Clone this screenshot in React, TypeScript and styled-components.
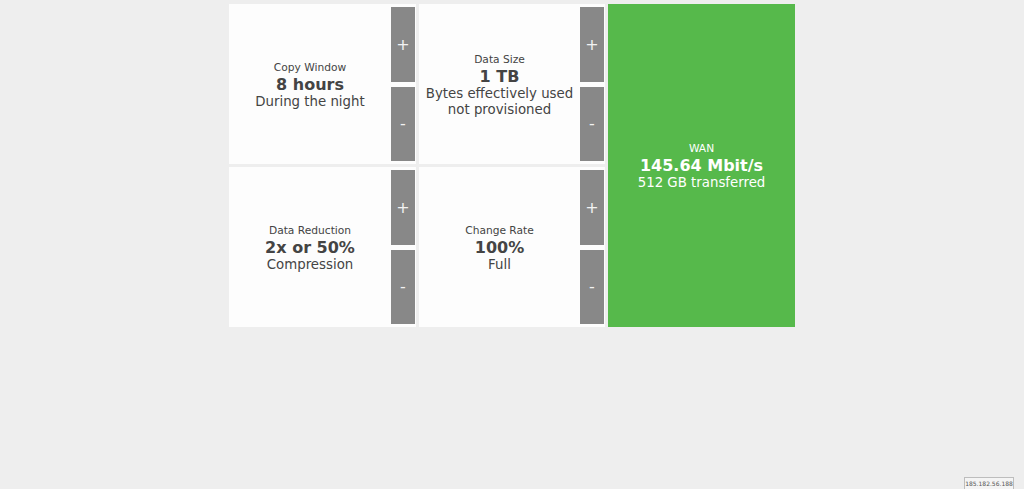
import React from "react";
import styled, { createGlobalStyle } from "styled-components";

const Global = createGlobalStyle`
  html, body { margin: 0; padding: 0; background: #eeeeee; }
  body { font-family: "DejaVu Sans", Verdana, sans-serif; height: 489px; overflow: hidden; }
`;

const Page = styled.div`
  display: flex;
  justify-content: center;
  padding-top: 4px;
`;

const Grid = styled.div`
  display: grid;
  grid-template-columns: 187px 186px 187px;
  grid-template-rows: 160px 160px;
  gap: 3px;
`;

const Cell = styled.div`
  display: flex;
  background: #fdfdfd;
`;

const Info = styled.div<{ $light?: boolean }>`
  flex: 1;
  display: flex;
  flex-direction: column;
  align-items: center;
  justify-content: center;
  text-align: center;
  padding-top: 2px;
  color: ${(p) => (p.$light ? "#ffffff" : "#444444")};
`;

const Title = styled.div`
  font-size: 10.67px;
  line-height: 14px;
`;

const Value = styled.div`
  font-size: 16px;
  font-weight: bold;
  line-height: 19px;
`;

const Sub = styled.div`
  font-size: 13.33px;
  line-height: 16px;
`;

const Buttons = styled.div`
  display: flex;
  flex-direction: column;
  gap: 5px;
  width: 24px;
  padding: 3px 1px 3px 0;
`;

const StepButton = styled.button`
  flex: 1;
  border: none;
  padding: 0;
  margin: 0;
  background: #888888;
  color: #f2f2f2;
  font-family: "DejaVu Sans", Verdana, sans-serif;
  font-size: 16px;
  cursor: pointer;
`;

const Wan = styled.div`
  grid-column: 3;
  grid-row: 1 / span 2;
  display: flex;
  background: #56b94b;
`;

const IpBox = styled.div`
  position: fixed;
  right: 10px;
  bottom: 0;
  width: 48px;
  padding: 1px 0 1px;
  border: 1px solid #bdbdbd;
  border-bottom: none;
  background: #f4f4f4;
  color: #555;
  font-family: "DejaVu Sans", Verdana, sans-serif;
  font-size: 6px;
  line-height: 9px;
  text-align: center;
  white-space: nowrap;
`;

type Item = { title: string; value: string; sub: string[] };

const items: Item[] = [
  { title: "Copy Window", value: "8 hours", sub: ["During the night"] },
  { title: "Data Size", value: "1 TB", sub: ["Bytes effectively used", "not provisioned"] },
  { title: "Data Reduction", value: "2x or 50%", sub: ["Compression"] },
  { title: "Change Rate", value: "100%", sub: ["Full"] },
];

function Control({ item }: { item: Item }) {
  return (
    <Cell>
      <Info>
        <Title>{item.title}</Title>
        <Value>{item.value}</Value>
        {item.sub.map((s) => (
          <Sub key={s}>{s}</Sub>
        ))}
      </Info>
      <Buttons>
        <StepButton>+</StepButton>
        <StepButton>-</StepButton>
      </Buttons>
    </Cell>
  );
}

export default function App() {
  return (
    <>
      <Global />
      <Page>
        <Grid>
          <Control item={items[0]} />
          <Control item={items[1]} />
          <Wan>
            <Info $light>
              <Title>WAN</Title>
              <Value>145.64 Mbit/s</Value>
              <Sub>512 GB transferred</Sub>
            </Info>
          </Wan>
          <Control item={items[2]} />
          <Control item={items[3]} />
        </Grid>
      </Page>
      <IpBox>185.182.56.188</IpBox>
    </>
  );
}
